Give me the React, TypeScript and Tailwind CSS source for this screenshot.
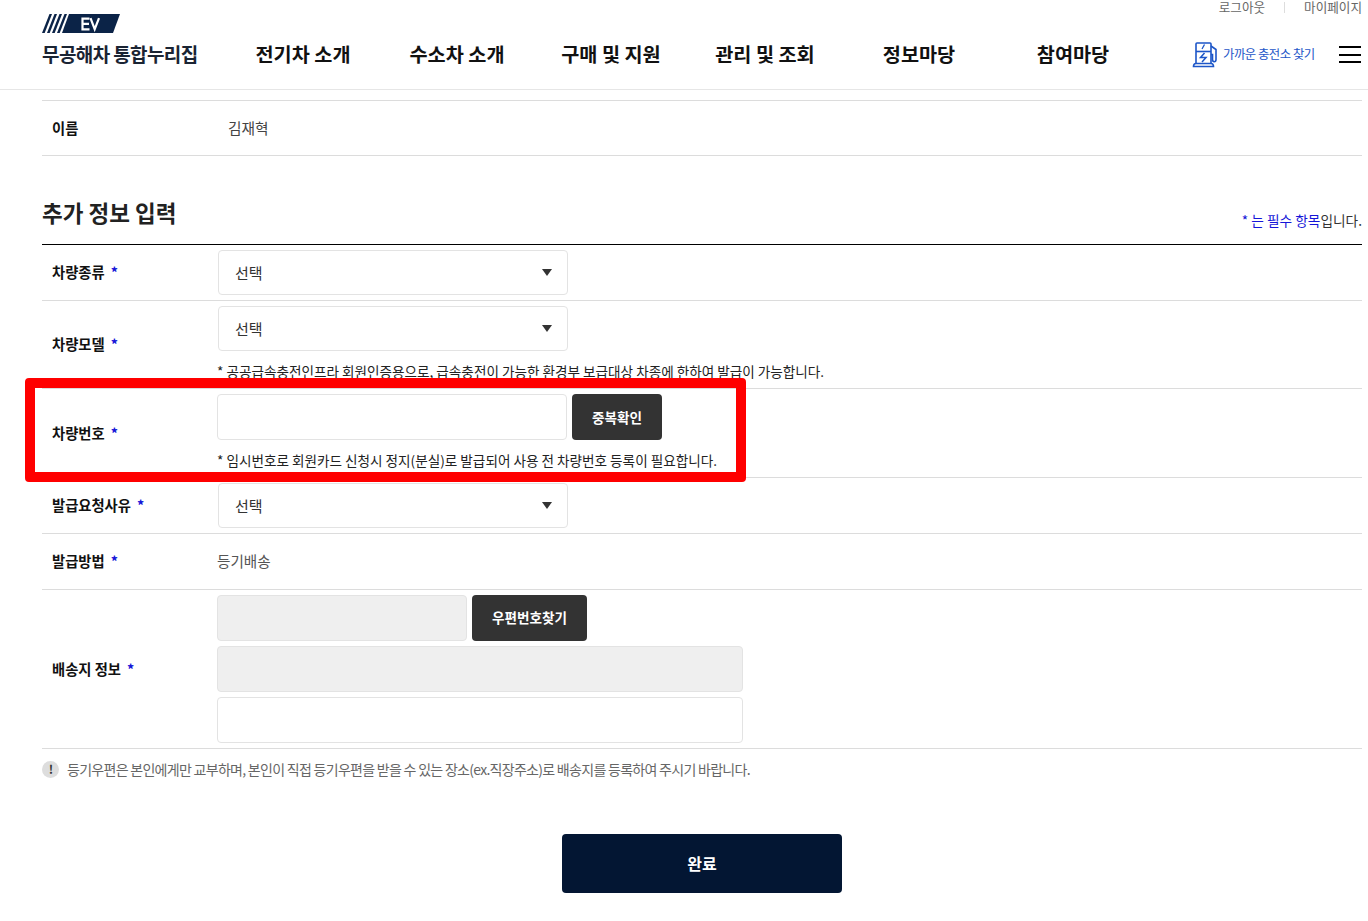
import React from "react";

const FONT = "font-['Noto_Sans_CJK_KR','Noto_Sans',sans-serif]";
const NAV = ["전기차 소개", "수소차 소개", "구매 및 지원", "관리 및 조회", "정보마당", "참여마당"];

function Logo() {
  return (
    <svg width="78" height="19" viewBox="0 0 78 19" className="block">
      <g fill="#0b2347">
        <polygon points="0,19 7.5,0 10,0 2.7,19" />
        <polygon points="5,19 12.5,0 15,0 7.7,19" />
        <polygon points="10,19 17.5,0 20,0 12.7,19" />
        <polygon points="15,19 22.5,0 25,0 17.7,19" />
        <polygon points="20,19 27,0 78,0 71,19" />
      </g>
      <path d="M47.5 4.6H40.5V15.4H47.5M40.5 9.9H47" stroke="#fff" strokeWidth="2.2" fill="none" />
      <path d="M48.5 4.2L52.7 15.2L57 4.2" stroke="#fff" strokeWidth="2.2" fill="none" />
    </svg>
  );
}

function ChargerIcon() {
  return (
    <svg width="26" height="27" viewBox="0 0 26 27" fill="none" stroke="#1d56c8" strokeWidth="1.6" className="block">
      <path d="M4 22V3Q4 2 5 2H18Q19 2 19 3V22" />
      <path d="M4 10.5H19" />
      <path d="M1.5 25.5C1.5 23.5 2.5 22.5 4 22.5H19C20.5 22.5 21.5 23.5 21.5 25.5Z" />
      <path d="M19 5L24 8.5V18.5C24 21.5 20.5 21.5 20.5 18.5V13.5H19" />
      <path d="M12.5 3.5L10 8" strokeWidth="1.3" />
      <path d="M12.5 12L8.5 16.5H14L10 21" strokeWidth="1.5" />
    </svg>
  );
}

function Arrow() {
  return <span className="h-0 w-0 border-x-[5px] border-t-[7px] border-x-transparent border-t-[#333]" />;
}

function Select() {
  return (
    <div className="ml-px flex h-[45px] w-[350px] items-center justify-between rounded-[4px] border border-[#e3e3e3] bg-white pl-4 pr-[15px] text-[15px] text-[#333]">
      <span className="pt-[1px]">선택</span>
      <Arrow />
    </div>
  );
}

function Row({ label, lift = false, className, children }: { label: string; lift?: boolean; className: string; children: React.ReactNode }) {
  return (
    <div className={`flex items-center border-b border-[#dcdcdc] ${className}`}>
      <div className={`w-[175px] shrink-0 pl-2.5 text-[14.3px] font-bold text-[#111] ${lift ? "pb-[2px]" : ""}`}>
        {label}
        <span className="ml-[6px] text-[#1515d8]">*</span>
      </div>
      <div className="min-w-0 flex-1">{children}</div>
    </div>
  );
}

function Note({ children }: { children: React.ReactNode }) {
  return <p className="mt-[12px] h-[17px] text-[13.6px] leading-[17px] whitespace-nowrap text-[#222]">{children}</p>;
}

function Field({ className }: { className: string }) {
  return <div className={`h-[46px] rounded-[4px] border border-[#e3e3e3] ${className}`} />;
}

function DarkButton({ className, children }: { className: string; children: React.ReactNode }) {
  return (
    <button className={`flex h-[46px] items-center justify-center rounded-[4px] bg-[#333] text-[13.6px] font-bold text-white ${className}`}>
      {children}
    </button>
  );
}

export default function App() {
  return (
    <div className={`relative h-[921px] w-[1368px] overflow-hidden bg-white ${FONT}`}>
      <header className="h-[90px] border-b border-[#e6e6e6]">
        <div className="flex h-[14px] items-center justify-end pr-[6px] text-[12.6px] leading-[14px] text-[#666]">
          <span>로그아웃</span>
          <span className="mx-[19px] h-[11px] w-px bg-[#ddd]" />
          <span>마이페이지</span>
        </div>
        <div className="flex">
          <div className="ml-[42px] w-[183px] shrink-0">
            <Logo />
            <div className="mt-[8px] whitespace-nowrap text-[19px] leading-[26px] font-bold tracking-[-0.6px] text-[#1a2433]">무공해차 통합누리집</div>
          </div>
          <nav className="flex pt-[26px]">
            {NAV.map((n) => (
              <div key={n} className="w-[154px] pl-[2px] text-center text-[19.7px] leading-[28px] font-bold text-[#111]">{n}</div>
            ))}
          </nav>
          <div className="ml-[43px] flex items-center self-start pt-[27px]">
            <ChargerIcon />
            <span className="ml-[5px] whitespace-nowrap text-[12.4px] tracking-[-0.5px] text-[#1d56c8]">가까운 충전소 찾기</span>
          </div>
          <div className="ml-[24px] mt-[32px] flex h-[17px] w-[22px] flex-col justify-between">
            <span className="h-[2px] bg-black" />
            <span className="h-[2px] bg-black" />
            <span className="h-[2px] bg-black" />
          </div>
        </div>
      </header>

      <main className="mx-[6px] ml-[42px] pt-[10px]">
        <div className="flex h-[56px] items-center border-y border-[#dcdcdc]">
          <div className="w-[186px] pb-[1px] pl-2.5 text-[14.3px] font-bold text-[#111]">이름</div>
          <div className="text-[14.7px] text-[#444]">김재혁</div>
        </div>

        <div className="flex h-[89px] items-end justify-between border-b border-black pb-[15px]">
          <h2 className="mb-[1px] text-[22.5px] leading-[32px] font-bold text-[#222]">추가 정보 입력</h2>
          <p className="text-[13.7px] leading-[18px] text-[#333]">
            <span className="text-[#1515d8]">* 는 필수 항목</span>입니다.
          </p>
        </div>

        <Row label="차량종류" lift className="h-[56px]"><Select /></Row>
        <Row label="차량모델" lift className="h-[88px]">
          <div className="pb-[3px]">
            <Select />
            <Note>* 공공급속충전인프라 회원인증용으로, 급속충전이 가능한 환경부 보급대상 차종에 한하여 발급이 가능합니다.</Note>
          </div>
        </Row>
        <Row label="차량번호" className="h-[89px]">
          <div className="pb-[3px]">
            <div className="flex gap-[5px]">
              <Field className="w-[350px]" />
              <DarkButton className="w-[90px] pt-px">중복확인</DarkButton>
            </div>
            <Note>* 임시번호로 회원카드 신청시 정지(분실)로 발급되어 사용 전 차량번호 등록이 필요합니다.</Note>
          </div>
        </Row>
        <Row label="발급요청사유" lift className="h-[56px]"><Select /></Row>
        <Row label="발급방법" lift className="h-[56px]"><span className="block pb-[2px] text-[14.6px] text-[#555]">등기배송</span></Row>
        <Row label="배송지 정보" className="h-[159px]">
          <div className="flex gap-[5px]">
            <Field className="w-[250px] bg-[#efefef]" />
            <DarkButton className="w-[115px] pb-[2px]">우편번호찾기</DarkButton>
          </div>
          <Field className="mt-[5px] w-[526px] bg-[#efefef]" />
          <Field className="mt-[5px] w-[526px]" />
        </Row>

        <div className="mt-[11px] flex items-center text-[14px] leading-[18px] tracking-[-0.71px] text-[#666]">
          <span className="mr-[8px] flex h-[17px] w-[17px] items-center justify-center rounded-full bg-[#ddd] text-[12px] font-bold text-[#333]">!</span>
          등기우편은 본인에게만 교부하며, 본인이 직접 등기우편을 받을 수 있는 장소(ex.직장주소)로 배송지를 등록하여 주시기 바랍니다.
        </div>

        <button className="ml-[520px] mt-[56px] block h-[59px] w-[280px] rounded-[4px] bg-[#031633] pb-[2px] text-[16px] font-bold text-white">완료</button>
      </main>

      <div className="pointer-events-none absolute left-[25px] top-[378px] h-[104px] w-[721px] rounded-[4px] border-[10px] border-[#ff0000]" />
    </div>
  );
}
